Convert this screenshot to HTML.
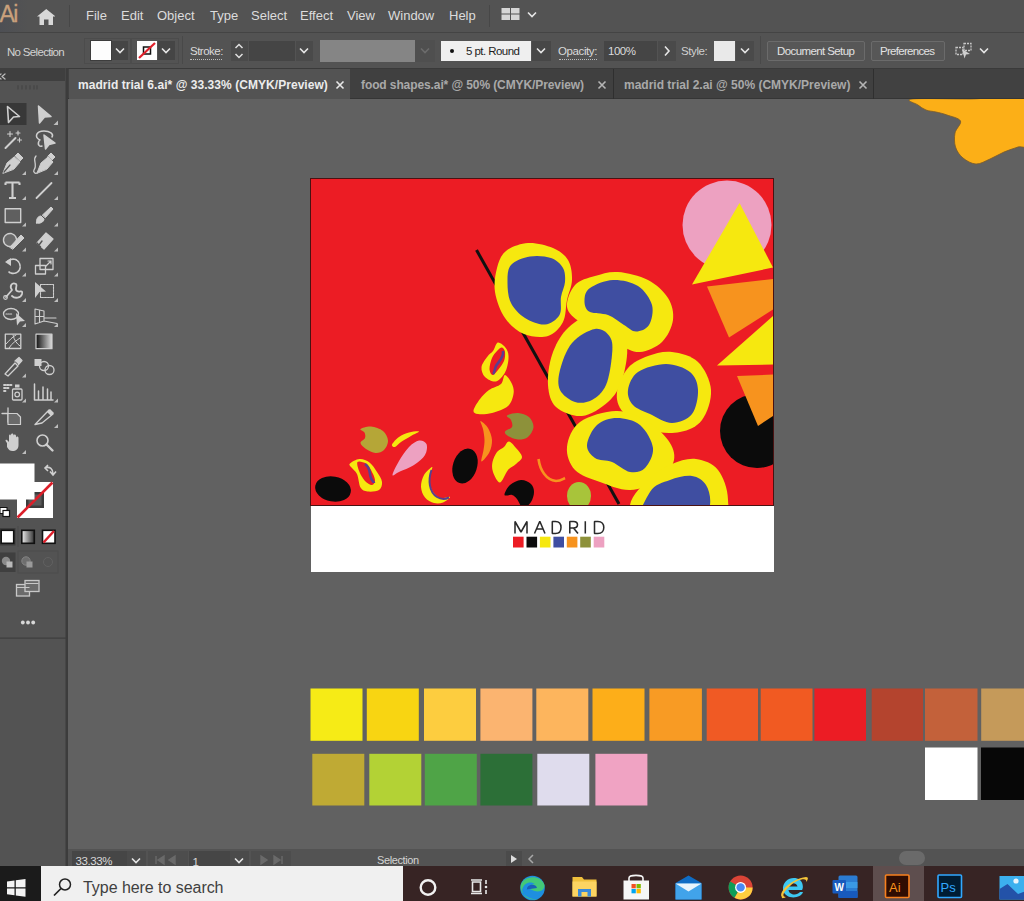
<!DOCTYPE html>
<html><head><meta charset="utf-8">
<style>
*{margin:0;padding:0;box-sizing:border-box}
html,body{width:1024px;height:901px;overflow:hidden;background:#616161;font-family:"Liberation Sans",sans-serif}
.a{position:absolute}
.t{position:absolute;white-space:nowrap;line-height:1}
#menubar{left:0;top:0;width:1024px;height:32px;background:#535353}
.mi{color:#dcdcdc;font-size:13px;top:9px}
#ctrl{left:0;top:32px;width:1024px;height:36px;background:#535353;border-top:1px solid #444;}
.ct{color:#d6d6d6;font-size:11.5px}
.box{position:absolute;background:#454545}
.chev{position:absolute}
#tabs{left:68px;top:68px;width:956px;height:31px;background:#414141;border-top:1px solid #3a3a3a;border-bottom:1px solid #353535}
#toolbar{left:0;top:68px;width:66px;height:798px;background:#535353}
#tbhead{left:0;top:68px;width:66px;height:13px;background:#3f3f3f}
#tbborder{left:65px;top:68px;width:3px;height:798px;background:#3c3c3c;border-left:1px solid #474747}
#status{left:68px;top:849px;width:956px;height:17px;background:#535353}
#taskbar{left:0;top:866px;width:1024px;height:35px;background:#372424}
</style></head><body>
<!-- canvas art -->
<svg class="a" style="left:0;top:0" width="1024" height="901" viewBox="0 0 1024 901">
  <defs><clipPath id="ab"><rect x="311" y="179" width="462" height="326"/></clipPath></defs>
  <rect x="311" y="178" width="463" height="394" fill="#fff"/>
  <rect x="310" y="178" width="464" height="328" fill="#4a1212"/>
  <rect x="311" y="179" width="462" height="326" fill="#ec1c24"/>
  <g clip-path="url(#ab)">
<circle cx="727" cy="225" r="44.5" fill="#eda1c1"/>
<polygon points="739.5,203 692,284.5 773,267.5" fill="#f6e80f"/>
<polygon points="707,286.5 773,279 773,309.5 729,337.5" fill="#f7931e"/>
<polygon points="773,316 717,365.5 773,364.5" fill="#f6e80f"/>
<circle cx="757" cy="431" r="37" fill="#0b0b0b"/>
<polygon points="737,376 773,374.5 773,416 758,426" fill="#f7931e"/>
<line x1="476.5" y1="250" x2="619" y2="504" stroke="#111" stroke-width="3"/>
<path d="M528.0,243.0 C535.8,242.5 546.3,245.2 553.0,248.0 C559.7,250.8 564.8,254.7 568.0,260.0 C571.2,265.3 572.2,273.3 572.0,280.0 C571.8,286.7 568.5,293.0 567.0,300.0 C565.5,307.0 566.2,316.0 563.0,322.0 C559.8,328.0 554.5,334.0 548.0,336.0 C541.5,338.0 531.2,337.0 524.0,334.0 C516.8,331.0 509.8,325.0 505.0,318.0 C500.2,311.0 496.3,300.3 495.0,292.0 C493.7,283.7 495.2,274.8 497.0,268.0 C498.8,261.2 500.8,255.2 506.0,251.0 C511.2,246.8 520.2,243.5 528.0,243.0Z" fill="#f6e80f"/>
<path d="M618.0,272.0 C626.8,272.7 639.7,275.7 648.0,280.0 C656.3,284.3 663.8,291.3 668.0,298.0 C672.2,304.7 674.0,312.7 673.0,320.0 C672.0,327.3 667.5,336.7 662.0,342.0 C656.5,347.3 647.0,351.5 640.0,352.0 C633.0,352.5 626.7,348.7 620.0,345.0 C613.3,341.3 606.7,333.8 600.0,330.0 C593.3,326.2 585.5,325.8 580.0,322.0 C574.5,318.2 567.8,313.2 567.0,307.0 C566.2,300.8 570.3,290.2 575.0,285.0 C579.7,279.8 587.8,278.2 595.0,276.0 C602.2,273.8 609.2,271.3 618.0,272.0Z" fill="#f6e80f"/>
<path d="M590.0,315.0 C598.2,313.7 608.8,317.0 615.0,322.0 C621.2,327.0 625.8,335.3 627.0,345.0 C628.2,354.7 625.2,370.5 622.0,380.0 C618.8,389.5 614.7,396.0 608.0,402.0 C601.3,408.0 590.7,415.2 582.0,416.0 C573.3,416.8 561.7,412.2 556.0,407.0 C550.3,401.8 548.7,393.7 548.0,385.0 C547.3,376.3 549.0,364.2 552.0,355.0 C555.0,345.8 559.7,336.7 566.0,330.0 C572.3,323.3 581.8,316.3 590.0,315.0Z" fill="#f6e80f"/>
<path d="M672.0,352.0 C680.3,353.0 691.5,355.7 698.0,362.0 C704.5,368.3 710.3,380.3 711.0,390.0 C711.7,399.7 707.2,413.0 702.0,420.0 C696.8,427.0 688.7,430.3 680.0,432.0 C671.3,433.7 659.5,433.3 650.0,430.0 C640.5,426.7 628.5,418.3 623.0,412.0 C617.5,405.7 616.2,399.3 617.0,392.0 C617.8,384.7 622.8,374.0 628.0,368.0 C633.2,362.0 640.7,358.7 648.0,356.0 C655.3,353.3 663.7,351.0 672.0,352.0Z" fill="#f6e80f"/>
<path d="M616.0,411.0 C626.8,410.7 636.3,415.2 645.0,420.0 C653.7,424.8 663.2,433.3 668.0,440.0 C672.8,446.7 675.3,453.3 674.0,460.0 C672.7,466.7 667.3,475.0 660.0,480.0 C652.7,485.0 640.0,489.7 630.0,490.0 C620.0,490.3 609.2,485.3 600.0,482.0 C590.8,478.7 580.5,475.8 575.0,470.0 C569.5,464.2 566.2,455.0 567.0,447.0 C567.8,439.0 571.8,428.0 580.0,422.0 C588.2,416.0 605.2,411.3 616.0,411.0Z" fill="#f6e80f"/>
<path d="M696.0,459.0 C703.7,460.0 712.7,463.2 718.0,470.0 C723.3,476.8 727.7,488.3 728.0,500.0 C728.3,511.7 734.7,533.3 720.0,540.0 C705.3,546.7 655.0,545.8 640.0,540.0 C625.0,534.2 628.3,515.3 630.0,505.0 C631.7,494.7 643.0,484.8 650.0,478.0 C657.0,471.2 664.3,467.2 672.0,464.0 C679.7,460.8 688.3,458.0 696.0,459.0Z" fill="#f6e80f"/>
<path d="M530.0,256.5 C536.7,255.3 545.5,256.1 551.0,258.0 C556.5,259.9 560.7,264.0 563.0,268.0 C565.3,272.0 565.3,277.2 565.0,282.0 C564.7,286.8 561.9,291.5 561.0,297.0 C560.1,302.5 562.2,310.4 559.5,315.0 C556.8,319.6 550.8,324.0 545.0,324.5 C539.2,325.0 530.7,321.6 525.0,318.0 C519.3,314.4 513.9,308.8 511.0,303.0 C508.1,297.2 507.5,289.3 507.5,283.0 C507.5,276.7 507.2,269.4 511.0,265.0 C514.8,260.6 523.3,257.7 530.0,256.5Z" fill="#3f4ea1"/>
<path d="M590.0,288.0 C594.8,284.7 605.0,280.3 613.0,280.0 C621.0,279.7 631.5,281.8 638.0,286.0 C644.5,290.2 650.2,298.5 652.0,305.0 C653.8,311.5 651.7,320.6 649.0,325.0 C646.3,329.4 640.2,331.5 636.0,331.5 C631.8,331.5 628.7,327.8 624.0,325.0 C619.3,322.2 613.8,317.2 608.0,315.0 C602.2,312.8 592.9,314.0 589.0,311.5 C585.1,309.0 584.3,303.9 584.5,300.0 C584.7,296.1 585.2,291.3 590.0,288.0Z" fill="#3f4ea1"/>
<path d="M595.0,329.0 C601.3,328.0 607.2,332.7 610.0,337.0 C612.8,341.3 612.7,347.0 612.0,355.0 C611.3,363.0 609.3,377.5 606.0,385.0 C602.7,392.5 597.2,397.2 592.0,400.0 C586.8,402.8 580.3,403.7 575.0,402.0 C569.7,400.3 562.5,395.3 560.0,390.0 C557.5,384.7 558.0,377.8 560.0,370.0 C562.0,362.2 566.2,349.8 572.0,343.0 C577.8,336.2 588.7,330.0 595.0,329.0Z" fill="#3f4ea1"/>
<path d="M666.0,364.0 C674.7,364.0 684.7,367.7 690.0,372.0 C695.3,376.3 697.7,383.0 698.0,390.0 C698.3,397.0 696.3,408.5 692.0,414.0 C687.7,419.5 679.0,423.0 672.0,423.0 C665.0,423.0 656.5,417.0 650.0,414.0 C643.5,411.0 636.7,409.0 633.0,405.0 C629.3,401.0 627.2,395.5 628.0,390.0 C628.8,384.5 631.7,376.3 638.0,372.0 C644.3,367.7 657.3,364.0 666.0,364.0Z" fill="#3f4ea1"/>
<path d="M617.0,418.0 C624.2,418.0 634.0,420.0 640.0,425.0 C646.0,430.0 652.2,440.8 653.0,448.0 C653.8,455.2 648.8,464.0 645.0,468.0 C641.2,472.0 635.5,473.0 630.0,472.0 C624.5,471.0 617.8,464.3 612.0,462.0 C606.2,459.7 599.2,460.8 595.0,458.0 C590.8,455.2 586.7,450.5 587.0,445.0 C587.3,439.5 592.0,429.5 597.0,425.0 C602.0,420.5 609.8,418.0 617.0,418.0Z" fill="#3f4ea1"/>
<path d="M692.0,476.0 C698.0,476.8 703.0,480.2 706.0,485.0 C709.0,489.8 711.0,497.5 710.0,505.0 C709.0,512.5 711.7,525.8 700.0,530.0 C688.3,534.2 648.3,536.3 640.0,530.0 C631.7,523.7 645.0,500.3 650.0,492.0 C655.0,483.7 663.0,482.7 670.0,480.0 C677.0,477.3 686.0,475.2 692.0,476.0Z" fill="#3f4ea1"/>
<ellipse cx="579" cy="496" rx="12" ry="14" fill="#a8c43a"/>
<path d="M498.0,342.5 C500.2,342.2 504.8,346.2 506.5,349.0 C508.2,351.8 508.8,355.1 508.5,359.0 C508.2,362.9 507.1,368.8 505.0,372.5 C502.9,376.2 499.3,380.8 496.0,381.5 C492.7,382.2 487.4,379.4 485.0,377.0 C482.6,374.6 481.1,370.4 481.5,367.0 C481.9,363.6 485.6,359.2 487.5,356.5 C489.4,353.8 491.2,353.3 493.0,351.0 C494.8,348.7 495.8,342.8 498.0,342.5Z" fill="#f6e80f"/>
<path d="M502.0,347.5 C503.3,347.7 504.7,349.8 505.0,352.0 C505.3,354.2 505.2,358.0 504.0,361.0 C502.8,364.0 499.9,367.7 498.0,370.0 C496.1,372.3 493.9,375.2 492.5,375.0 C491.1,374.8 489.6,371.8 489.5,369.0 C489.4,366.2 490.8,361.0 492.0,358.0 C493.2,355.0 495.3,352.8 497.0,351.0 C498.7,349.2 500.7,347.3 502.0,347.5Z" fill="#ec1c24"/>
<path d="M503,351 C504,358 498,362 496,366 C494.5,369 495,372 493,374" stroke="#5a3f8f" stroke-width="2.6" fill="none"/>
<path d="M473.5,410.5 C473.8,408.0 477.4,402.4 480.0,399.0 C482.6,395.6 485.5,392.5 489.0,390.0 C492.5,387.5 498.3,386.5 501.0,384.0 C503.7,381.5 503.2,375.0 505.0,375.0 C506.8,375.0 510.6,380.8 512.0,384.0 C513.4,387.2 514.2,390.3 513.5,394.0 C512.8,397.7 511.6,402.8 508.0,406.0 C504.4,409.2 497.0,411.7 492.0,413.0 C487.0,414.3 481.1,414.4 478.0,414.0 C474.9,413.6 473.2,413.0 473.5,410.5Z" fill="#f6e80f"/>
<path d="M507.0,415.5 C508.2,414.3 514.3,412.8 518.0,413.0 C521.7,413.2 526.4,414.7 529.0,417.0 C531.6,419.3 533.7,423.7 533.5,427.0 C533.3,430.3 530.6,434.9 528.0,437.0 C525.4,439.1 521.3,439.7 518.0,439.5 C514.7,439.3 510.2,437.3 508.0,436.0 C505.8,434.7 504.3,433.0 505.0,431.5 C505.7,430.0 511.0,428.9 512.0,427.0 C513.0,425.1 511.8,421.9 511.0,420.0 C510.2,418.1 505.8,416.7 507.0,415.5Z" fill="#8d913a"/>
<path d="M480.5,421.0 C481.3,420.8 486.1,424.8 488.0,428.0 C489.9,431.2 491.8,436.0 492.0,440.0 C492.2,444.0 491.2,448.4 489.5,452.0 C487.8,455.6 482.5,461.8 481.5,461.5 C480.5,461.2 483.0,453.6 483.5,450.0 C484.0,446.4 484.6,443.5 484.5,440.0 C484.4,436.5 483.7,432.2 483.0,429.0 C482.3,425.8 479.7,421.2 480.5,421.0Z" fill="#f7931e"/>
<path d="M509.0,441.5 C511.0,441.7 513.8,445.4 516.0,448.0 C518.2,450.6 522.0,454.3 522.0,457.0 C522.0,459.7 518.3,461.8 516.0,464.0 C513.7,466.2 510.7,466.9 508.0,470.0 C505.3,473.1 502.5,482.2 500.0,482.5 C497.5,482.8 494.2,475.4 493.0,472.0 C491.8,468.6 491.8,465.3 492.5,462.0 C493.2,458.7 495.1,454.5 497.0,452.0 C498.9,449.5 502.0,448.8 504.0,447.0 C506.0,445.2 507.0,441.3 509.0,441.5Z" fill="#f6e80f"/>
<path d="M504.5,495.0 C504.2,493.3 507.2,487.5 510.0,485.0 C512.8,482.5 517.5,480.2 521.0,480.0 C524.5,479.8 528.8,482.0 531.0,484.0 C533.2,486.0 534.0,489.0 534.0,492.0 C534.0,495.0 532.8,499.3 531.0,502.0 C529.2,504.7 525.3,508.5 523.0,508.0 C520.7,507.5 518.8,501.2 517.0,499.0 C515.2,496.8 514.1,495.7 512.0,495.0 C509.9,494.3 504.8,496.7 504.5,495.0Z" fill="#0b0b0b"/>
<path d="M538.5,459 C540,470 546,480 556,481 C560,481 563,479 565,478" stroke="#f7931e" stroke-width="2.6" fill="none"/>
<ellipse cx="465" cy="466" rx="12" ry="18" transform="rotate(18 465 466)" fill="#0b0b0b"/>
<ellipse cx="333" cy="489" rx="18" ry="12.5" transform="rotate(10 333 489)" fill="#0b0b0b"/>
<path d="M360.5,429.0 C361.6,428.0 367.2,426.2 371.0,426.5 C374.8,426.8 380.2,428.7 383.0,431.0 C385.8,433.3 387.8,437.3 388.0,440.5 C388.2,443.7 386.1,447.9 384.0,450.0 C381.9,452.1 378.5,453.2 375.5,453.0 C372.5,452.8 368.5,450.7 366.0,449.0 C363.5,447.3 360.7,444.8 360.5,443.0 C360.3,441.2 364.3,439.8 365.0,438.0 C365.7,436.2 365.2,434.0 364.5,432.5 C363.8,431.0 359.4,430.0 360.5,429.0Z" fill="#b5a637"/>
<path d="M350.0,463.5 C351.4,462.2 356.2,459.2 359.5,459.0 C362.8,458.8 366.6,460.3 369.5,462.5 C372.4,464.7 374.9,468.8 377.0,472.0 C379.1,475.2 381.7,479.0 382.0,482.0 C382.3,485.0 381.4,488.4 379.0,490.0 C376.6,491.6 370.6,491.9 367.5,491.5 C364.4,491.1 362.2,490.4 360.5,487.5 C358.8,484.6 358.6,477.4 357.0,474.0 C355.4,470.6 352.2,468.8 351.0,467.0 C349.8,465.2 348.6,464.8 350.0,463.5Z" fill="#f6e80f"/>
<path d="M357.5,462.0 C358.6,460.6 363.8,462.2 366.0,463.5 C368.2,464.8 369.5,467.2 371.0,470.0 C372.5,472.8 374.8,477.5 375.0,480.0 C375.2,482.5 373.7,484.8 372.0,485.0 C370.3,485.2 367.1,483.2 365.0,481.0 C362.9,478.8 360.8,475.2 359.5,472.0 C358.2,468.8 356.4,463.4 357.5,462.0Z" fill="#ec1c24"/>
<path d="M365,464 C371,468 369,474 371,478 C372,481 374,482 374,483" stroke="#5a3f8f" stroke-width="2.6" fill="none"/>
<path d="M392.0,444.5 C392.7,442.8 396.2,439.0 399.0,437.0 C401.8,435.0 405.7,433.4 409.0,432.5 C412.3,431.6 418.7,430.9 419.0,431.5 C419.3,432.1 414.0,434.2 411.0,436.0 C408.0,437.8 403.7,440.2 401.0,442.0 C398.3,443.8 396.5,446.6 395.0,447.0 C393.5,447.4 391.3,446.2 392.0,444.5Z" fill="#f6e80f"/>
<path d="M392.5,475.0 C392.5,473.2 396.2,465.7 399.0,461.0 C401.8,456.3 405.7,450.4 409.0,447.0 C412.3,443.6 416.1,441.0 419.0,440.5 C421.9,440.0 425.5,441.6 426.5,444.0 C427.5,446.4 427.1,451.5 425.0,455.0 C422.9,458.5 418.3,462.2 414.0,465.0 C409.7,467.8 402.6,470.3 399.0,472.0 C395.4,473.7 392.5,476.8 392.5,475.0Z" fill="#eda1c1"/>
<path d="M432.0,467.0 C430.8,467.5 425.8,471.7 424.0,475.0 C422.2,478.3 420.8,483.2 421.0,487.0 C421.2,490.8 422.8,494.8 425.0,497.5 C427.2,500.2 431.0,502.2 434.0,503.0 C437.0,503.8 440.3,503.5 443.0,502.5 C445.7,501.5 450.5,497.8 450.0,497.0 C449.5,496.2 442.9,499.0 440.0,498.0 C437.1,497.0 434.2,493.8 432.5,491.0 C430.8,488.2 429.8,484.2 429.5,481.0 C429.2,477.8 430.6,474.3 431.0,472.0 C431.4,469.7 433.2,466.5 432.0,467.0Z" fill="#f6e80f"/>
<path d="M431.5,470 C428,480 429,492 437,497 C441,499.5 446,499 449,497.5" stroke="#5a3f8f" stroke-width="2" fill="none"/>
  </g>
<path d="M515,533.5 V521.5 L521,532 L527,521.5 V533.5 M534.5,533.5 L539.8,521.3 L545,533.5 M536.6,529 H543 M552.3,533.5 V521.5 H555.5 C559.5,521.5 561,524.5 561,527.5 C561,530.5 559.5,533.5 555.5,533.5 Z M569.8,533.5 V521.5 H573.5 C576.5,521.5 577.5,523 577.5,524.8 C577.5,526.8 576,528 573.5,528 H569.8 M573.5,528 L578,533.5 M585.3,521.3 V533.5 M594.5,533.5 V521.5 H597.8 C602,521.5 603.8,524.5 603.8,527.5 C603.8,530.5 602,533.5 597.8,533.5 Z" fill="none" stroke="#2a2a2a" stroke-width="1.55" stroke-linejoin="bevel"/>
<rect x="513.0" y="536.7" width="10.6" height="10.8" fill="#ec1c24"/>
<rect x="526.5" y="536.7" width="10.6" height="10.8" fill="#0b0b0b"/>
<rect x="539.9" y="536.7" width="10.6" height="10.8" fill="#f6e80f"/>
<rect x="553.4" y="536.7" width="10.6" height="10.8" fill="#3f4ea1"/>
<rect x="566.8" y="536.7" width="10.6" height="10.8" fill="#f7931e"/>
<rect x="580.2" y="536.7" width="10.6" height="10.8" fill="#8d913a"/>
<rect x="593.7" y="536.7" width="10.6" height="10.8" fill="#eda1c1"/>
<rect x="310.5" y="688.5" width="52.0" height="52.3" fill="#f6eb16"/>
<rect x="366.8" y="688.5" width="52.0" height="52.3" fill="#f8d512"/>
<rect x="424.0" y="688.5" width="52.0" height="52.3" fill="#fdcd3f"/>
<rect x="480.4" y="688.5" width="52.0" height="52.3" fill="#fbb470"/>
<rect x="536.3" y="688.5" width="52.0" height="52.3" fill="#fdb55d"/>
<rect x="592.5" y="688.5" width="52.0" height="52.3" fill="#fdae19"/>
<rect x="649.4" y="688.5" width="52.5" height="52.3" fill="#f89b24"/>
<rect x="706.7" y="688.5" width="51.3" height="52.3" fill="#f05a24"/>
<rect x="760.7" y="688.5" width="51.8" height="52.3" fill="#f15a22"/>
<rect x="814.4" y="688.5" width="51.6" height="52.3" fill="#ec1c24"/>
<rect x="871.7" y="688.5" width="51.3" height="52.3" fill="#b4442e"/>
<rect x="925.0" y="688.5" width="52.5" height="52.3" fill="#c3613a"/>
<rect x="981.2" y="688.5" width="52.0" height="52.3" fill="#c59a5a"/>
<rect x="312.3" y="753.8" width="52" height="51.7" fill="#bfaa34"/>
<rect x="369.3" y="753.8" width="52" height="51.7" fill="#b3d235"/>
<rect x="424.8" y="753.8" width="52" height="51.7" fill="#4fa447"/>
<rect x="480.4" y="753.8" width="52" height="51.7" fill="#2c6f37"/>
<rect x="537.3" y="753.8" width="52" height="51.7" fill="#dfdced"/>
<rect x="595.4" y="753.8" width="52" height="51.7" fill="#f0a3c3"/>
<rect x="925" y="747.5" width="52.5" height="52.5" fill="#ffffff"/>
<rect x="981" y="747.5" width="45" height="52.5" fill="#070707"/>
<path d="M912.0,99.0 C903.3,100.0 915.7,103.2 918.0,105.0 C920.3,106.8 923.0,108.8 926.0,110.0 C929.0,111.2 932.5,111.2 936.0,112.0 C939.5,112.8 942.9,113.5 947.0,115.0 C951.1,116.5 959.2,118.0 960.5,121.0 C961.8,124.0 955.8,128.7 955.0,133.0 C954.2,137.3 954.2,142.8 955.5,147.0 C956.8,151.2 959.6,155.2 963.0,158.0 C966.4,160.8 971.5,163.8 976.0,164.0 C980.5,164.2 985.3,161.0 990.0,159.0 C994.7,157.0 999.3,154.0 1004.0,152.0 C1008.7,150.0 1013.7,148.5 1018.0,147.0 C1022.3,145.5 1028.0,151.0 1030.0,143.0 C1032.0,135.0 1040.0,106.3 1030.0,99.0 C1020.0,91.7 989.7,99.0 970.0,99.0 C950.3,99.0 920.7,98.0 912.0,99.0Z" fill="#fcaf17" stroke="#7a5a2a" stroke-width="0.8"/>
</svg>

<div id="menubar" class="a"></div>
<div class="a" style="left:0;top:0;width:28px;height:32px;background:linear-gradient(90deg,#4d4f54,#535353)"></div>
<div class="t" style="left:-0.5px;top:2.5px;font-size:23px;color:#c9a07c;letter-spacing:-1.5px;-webkit-text-stroke:0.3px #c9a07c">Ai</div>
<svg class="a" style="left:36.5px;top:8.5px" width="18.5" height="16.5" viewBox="0 0 18.5 16.5"><path d="M9.25 0 L18.5 7.5 L16 7.5 L16 16.5 L11.5 16.5 L11.5 10.5 L7 10.5 L7 16.5 L2.5 16.5 L2.5 7.5 L0 7.5Z" fill="#d8d8d8"/></svg>
<div class="a" style="left:69px;top:5px;width:1px;height:22px;background:#474747"></div>
<div class="t mi" style="left:86px">File</div>
<div class="t mi" style="left:121px">Edit</div>
<div class="t mi" style="left:157px">Object</div>
<div class="t mi" style="left:210px">Type</div>
<div class="t mi" style="left:251px">Select</div>
<div class="t mi" style="left:300px">Effect</div>
<div class="t mi" style="left:347px">View</div>
<div class="t mi" style="left:388px">Window</div>
<div class="t mi" style="left:449px">Help</div>
<div class="a" style="left:489px;top:5px;width:1px;height:22px;background:#474747"></div>
<svg class="a" style="left:501px;top:8px" width="19" height="12" viewBox="0 0 19 12"><rect x="0.5" y="0" width="8.5" height="5.5" fill="#d6d6d6"/><rect x="0.5" y="6.5" width="8.5" height="5.5" fill="#d6d6d6"/><rect x="10" y="0" width="8.5" height="5.5" fill="#d6d6d6"/><rect x="10" y="6.5" width="8.5" height="5.5" fill="#d6d6d6"/></svg>
<svg class="a" style="left:527px;top:11px" width="10" height="7" viewBox="0 0 10 7"><path d="M1 1.5 L5 5.5 L9 1.5" stroke="#e6e6e6" stroke-width="1.6" fill="none"/></svg>

<div id="ctrl" class="a"></div>

<!-- control bar contents -->
<div class="t ct" style="left:7px;top:46.5px;font-size:11.5px;color:#d2d2d2;letter-spacing:-0.68px">No Selection</div>
<div class="a" style="left:84px;top:38px;width:47px;height:26px;border:1px solid #4c4c4c"></div>
<div class="a" style="left:131px;top:38px;width:48px;height:26px;border:1px solid #4c4c4c"></div>
<div class="a" style="left:90px;top:40px;width:22px;height:21px;background:#3d3d3d"></div>
<div class="a" style="left:91px;top:41px;width:20px;height:19px;background:#fdfdfd"></div>
<div class="box" style="left:112px;top:41px;width:16px;height:19px"></div>
<svg class="a" style="left:115px;top:47px" width="10" height="7" viewBox="0 0 10 7"><path d="M1 1.5 L5 5.5 L9 1.5" stroke="#e6e6e6" stroke-width="1.6" fill="none"/></svg>
<div class="a" style="left:137px;top:41px;width:20px;height:19px;background:#fdfdfd"></div>
<svg class="a" style="left:137px;top:41px" width="20" height="19" viewBox="0 0 20 19"><rect x="6.5" y="6" width="7" height="7" fill="none" stroke="#111" stroke-width="1.5"/><line x1="2" y1="17" x2="18" y2="2" stroke="#e0202a" stroke-width="2.2"/></svg>
<div class="box" style="left:158px;top:41px;width:17px;height:19px"></div>
<svg class="a" style="left:161px;top:47px" width="10" height="7" viewBox="0 0 10 7"><path d="M1 1.5 L5 5.5 L9 1.5" stroke="#e6e6e6" stroke-width="1.6" fill="none"/></svg>
<div class="a" style="left:182px;top:36px;width:1px;height:28px;background:#494949"></div>
<div class="t ct" style="left:190px;top:46px;font-size:11.5px;color:#dadada;letter-spacing:-0.5px">Stroke:</div>
<div class="a" style="left:190px;top:59px;width:32px;height:0;border-top:1px dotted #bdbdbd"></div>
<div class="box" style="left:231px;top:41px;width:17px;height:20px;background:#4a4a4a"></div>
<svg class="a" style="left:233px;top:42px" width="12" height="18" viewBox="0 0 12 18"><path d="M2.5 6 L6 2.5 L9.5 6 M2.5 12 L6 15.5 L9.5 12" stroke="#e0e0e0" stroke-width="1.5" fill="none"/></svg>
<div class="box" style="left:249px;top:41px;width:46px;height:20px;background:#454545"></div>
<div class="box" style="left:296px;top:41px;width:17px;height:20px;background:#4a4a4a"></div>
<svg class="a" style="left:299px;top:47px" width="10" height="7" viewBox="0 0 10 7"><path d="M1 1.5 L5 5.5 L9 1.5" stroke="#e6e6e6" stroke-width="1.6" fill="none"/></svg>
<div class="a" style="left:320px;top:40px;width:95px;height:22px;background:#858585"></div>
<div class="box" style="left:415px;top:40px;width:20px;height:22px;background:#4f4f4f"></div>
<svg class="a" style="left:420px;top:47px" width="10" height="7" viewBox="0 0 10 7"><path d="M1 1.5 L5 5.5 L9 1.5" stroke="#6c6c6c" stroke-width="1.6" fill="none"/></svg>
<div class="a" style="left:441px;top:40.5px;width:90px;height:20.5px;background:#efefef"></div>
<div class="a" style="left:449.5px;top:48.5px;width:4.5px;height:4.5px;border-radius:50%;background:#111"></div>
<div class="t" style="left:466px;top:45.5px;font-size:11.5px;color:#1e1e1e;letter-spacing:-0.55px">5 pt. Round</div>
<div class="box" style="left:532px;top:41px;width:19px;height:20px;background:#474747"></div>
<svg class="a" style="left:536px;top:47px" width="10" height="7" viewBox="0 0 10 7"><path d="M1 1.5 L5 5.5 L9 1.5" stroke="#e6e6e6" stroke-width="1.6" fill="none"/></svg>
<div class="t ct" style="left:558px;top:46px;font-size:11.5px;color:#dadada;letter-spacing:-0.4px">Opacity:</div>
<div class="a" style="left:559px;top:59px;width:38px;height:0;border-top:1px dotted #bdbdbd"></div>
<div class="box" style="left:604px;top:41px;width:53px;height:20px;background:#454545"></div>
<div class="t ct" style="left:608px;top:46px;font-size:11.5px;color:#dcdcdc;letter-spacing:-0.5px">100%</div>
<div class="box" style="left:658px;top:41px;width:18px;height:20px;background:#4a4a4a"></div>
<svg class="a" style="left:663px;top:45px" width="8" height="12" viewBox="0 0 8 12"><path d="M2 1.5 L6 6 L2 10.5" stroke="#e6e6e6" stroke-width="1.6" fill="none"/></svg>
<div class="t ct" style="left:681px;top:46px;font-size:11.5px;color:#cfcfcf;letter-spacing:-0.4px">Style:</div>
<div class="a" style="left:714px;top:40.5px;width:21px;height:20.5px;background:#e9e9e9"></div>
<div class="box" style="left:736px;top:41px;width:18px;height:20px;background:#4a4a4a"></div>
<svg class="a" style="left:740px;top:47px" width="10" height="7" viewBox="0 0 10 7"><path d="M1 1.5 L5 5.5 L9 1.5" stroke="#e6e6e6" stroke-width="1.6" fill="none"/></svg>
<div class="a" style="left:760px;top:36px;width:1px;height:28px;background:#494949"></div>
<div class="a" style="left:767px;top:40.5px;width:98px;height:20px;border:1px solid #6b6b6b;border-radius:2px;background:#575757"></div>
<div class="t ct" style="left:777px;top:46px;font-size:11.5px;color:#e2e2e2;letter-spacing:-0.6px">Document Setup</div>
<div class="a" style="left:871px;top:40.5px;width:74px;height:20px;border:1px solid #6b6b6b;border-radius:2px;background:#575757"></div>
<div class="t ct" style="left:880px;top:46px;font-size:11.5px;color:#e2e2e2;letter-spacing:-0.7px">Preferences</div>
<svg class="a" style="left:954px;top:42px" width="20" height="18" viewBox="0 0 20 18"><rect x="2" y="5.5" width="7" height="7" fill="none" stroke="#c8c8c8" stroke-width="1.3" stroke-dasharray="2 1"/><rect x="10" y="1.5" width="7" height="7" fill="none" stroke="#c8c8c8" stroke-width="1.3" stroke-dasharray="2 1"/><path d="M8 7 L16 12 L12 12.5 L10.5 16.5Z" fill="#d0d0d0"/></svg>
<svg class="a" style="left:979px;top:47px" width="10" height="7" viewBox="0 0 10 7"><path d="M1 1.5 L5 5.5 L9 1.5" stroke="#e6e6e6" stroke-width="1.6" fill="none"/></svg>
<div id="tabs" class="a"></div>

<!-- tabs -->
<div class="a" style="left:69px;top:69px;width:281px;height:30px;background:#535353"></div>
<div class="t" style="left:78px;top:79px;font-size:12px;font-weight:bold;color:#ececec;letter-spacing:0.05px">madrid trial 6.ai* @ 33.33% (CMYK/Preview)</div>
<svg class="a" style="left:335px;top:80px" width="10" height="10" viewBox="0 0 10 10"><path d="M1.5 1.5 L8.5 8.5 M8.5 1.5 L1.5 8.5" stroke="#e8e8e8" stroke-width="1.6"/></svg>
<div class="a" style="left:350px;top:69px;width:263px;height:29px;background:#404040"></div>
<div class="t" style="left:361px;top:79px;font-size:12px;font-weight:bold;color:#a9a9a9;letter-spacing:-0.1px">food shapes.ai* @ 50% (CMYK/Preview)</div>
<svg class="a" style="left:597px;top:80px" width="10" height="10" viewBox="0 0 10 10"><path d="M1.5 1.5 L8.5 8.5 M8.5 1.5 L1.5 8.5" stroke="#b5b5b5" stroke-width="1.6"/></svg>
<div class="a" style="left:613px;top:69px;width:1px;height:30px;background:#2f2f2f"></div>
<div class="a" style="left:614px;top:69px;width:259px;height:29px;background:#404040"></div>
<div class="t" style="left:624px;top:79px;font-size:12px;font-weight:bold;color:#a9a9a9;letter-spacing:0px">madrid trial 2.ai @ 50% (CMYK/Preview)</div>
<svg class="a" style="left:858px;top:80px" width="10" height="10" viewBox="0 0 10 10"><path d="M1.5 1.5 L8.5 8.5 M8.5 1.5 L1.5 8.5" stroke="#b5b5b5" stroke-width="1.6"/></svg>
<div class="a" style="left:873px;top:69px;width:1px;height:30px;background:#2f2f2f"></div>
<div id="toolbar" class="a"></div>
<div id="tbhead" class="a"></div>
<div id="tbborder" class="a"></div>
<!--TOOLBAR-->
<svg class="a" style="left:0;top:0" width="68" height="866" viewBox="0 0 68 866">
<g fill="none" stroke="#cfcfcf" stroke-width="1.5" stroke-linejoin="round" stroke-linecap="round">
<!-- panel header -->
<path d="M1 74 L-2 76.5 L1 79 M5 74 L2 76.5 L5 79" stroke="#bdbdbd" stroke-width="1.2"/>
<path d="M18 85.5 V89 M22 85.5 V89 M26 85.5 V89 M30 85.5 V89 M34 85.5 V89 M37 85.5 V89" stroke="#444444" stroke-width="1.1"/>
<!-- row1 selection -->
<rect x="0" y="103" width="26.5" height="22" fill="#383838" stroke="none"/>
<path d="M7.5 106.5 L19.5 116.5 L13.5 117 L8.5 122.5 Z" stroke-width="1.6"/>
<path d="M38.5 106 L51 116.5 L44.5 117 L39.5 123 Z" fill="#cfcfcf"/>
<!-- row2 magic wand -->
<path d="M5.5 148 L15.5 138" stroke-width="2"/>
<path d="M10 131.5 V136.5 M7.5 134 H12.5 M18 131 V135 M16 133 H20 M19.5 138 V142 M17.5 140 H21.5" stroke-width="1.1"/>
<!-- lasso -->
<path d="M40 140 C34 137 36 131 44 131 C50 131 54 134 52 137 M39 141 C37 145 40 147 42 146" stroke-width="1.5"/>
<path d="M44 135 L55 143 L49 144.5 L45.5 149 Z" fill="#cfcfcf"/>
<!-- row3 pen -->
<path d="M3 173 L7 163 L14 157 L20 162 L14 169 Z" fill="#cfcfcf" stroke-width="1"/>
<path d="M15 156 L18 153 L23 158 L20 161 Z" fill="#cfcfcf" stroke-width="1"/>
<path d="M4 172 L10 165" stroke="#535353" stroke-width="1.2"/>
<path d="M36 156 C32 160 38 164 34 170 C33 172 35 174 37 173" stroke-width="1.3"/>
<path d="M37 173 L41 163 L48 157 L53 162 L47 169 Z" fill="#cfcfcf" stroke-width="1"/>
<path d="M48 156 L51 153 L55 157 L52 160 Z" fill="#cfcfcf" stroke-width="1"/>
<!-- row4 type / line -->
<path d="M5.5 182.5 H19.5 M12.5 182.5 V198 M9 198 H16 M5.5 182.5 V185 M19.5 182.5 V185" stroke-width="2.1" stroke-linecap="butt"/>
<path d="M36.5 198 L51.5 183" stroke-width="1.8"/>
<!-- row5 rect / brush -->
<rect x="5.2" y="208.7" width="15.5" height="13.8" fill="#5f5f5f" stroke-width="1.4"/>
<path d="M36.5 223 C36 219 38 216 41 216 L44 219 C44 222 40 224 36.5 223 Z" fill="#cfcfcf" stroke-width="1"/>
<path d="M42.5 215 L51 207 L53 209 L45.5 217.5 Z" fill="#cfcfcf" stroke-width="1"/>
<!-- row6 shaper / eraser -->
<circle cx="10" cy="240" r="6.5" fill="#6a6a6a" stroke-width="1.5" stroke-dasharray="3 1"/>
<path d="M10 247 L21 235 L24 238 L13 249 Z" fill="#cfcfcf" stroke-width="1"/>
<path d="M37 243 L46 233 L53 239 L44 249 Z" fill="#cfcfcf" stroke-width="1.2"/>
<path d="M37 243 L40.5 247 M39 245 L42 241" stroke="#535353" stroke-width="1.4"/>
<!-- row7 rotate / scale -->
<path d="M8 261 C15 256 21 262 20 268 C19 273 13 275 9 272" stroke-width="1.6" stroke-dasharray="2.2 1.2"/>
<path d="M5 262 L11 258 L11 266 Z" fill="#cfcfcf" stroke="none"/>
<rect x="35.5" y="265.5" width="10" height="8.5" stroke-width="1.3"/>
<rect x="40" y="258.5" width="13" height="11" stroke-width="1.3"/>
<path d="M46 266 L51 261 M48 261 H51 V264" stroke-width="1.2"/>
<!-- row8 puppet / free transform -->
<path d="M6 297 L12 290 C9 286 12 282 16 284 C18 286 14 289 17 291 C20 293 23 289 22 294 C21 298 15 299 12 296" stroke-width="1.8"/>
<circle cx="5.5" cy="297.5" r="1.8" stroke-width="1.2"/>
<path d="M35 282 L46 291.5 L39.5 292 L35 298 Z" fill="#cfcfcf" stroke="none"/>
<rect x="40.5" y="284.5" width="13" height="13" stroke-width="1.1" stroke-dasharray="2 1"/>
<!-- row9 shape builder / perspective -->
<ellipse cx="11" cy="314" rx="7.5" ry="5.5" stroke-width="1.3"/>
<path d="M6 314 H12" stroke-width="1.2" stroke-dasharray="1.2 1"/>
<path d="M16 313 L25 321 L20 321.5 L17 325.5 Z" fill="#cfcfcf" stroke="none"/>
<path d="M35 309 L44 311 V321 L35 324 Z M35 316.5 H44 M39.5 310 V322.5 M44 318 L56 318 M44 321 L57 323.5" stroke-width="1.1"/>
<!-- row10 mesh / gradient -->
<rect x="5.3" y="334.2" width="15.5" height="14.3" stroke-width="1.3"/>
<path d="M6 344 C10 340 12 337 16 335 M9 348 C12 343 16 341 20 338 M13 335 C14 340 17 344 20 346" stroke-width="1"/>
<defs><linearGradient id="tg" x1="0" x2="1"><stop offset="0" stop-color="#111"/><stop offset="1" stop-color="#ddd"/></linearGradient></defs>
<rect x="36" y="334.2" width="16" height="14.5" fill="url(#tg)" stroke-width="1.2"/>
<!-- row11 eyedropper / blend -->
<path d="M5 374 L15 363 L18 366 L8 376 Z" stroke-width="1.3"/>
<path d="M15 361 L19 357.5 L22 360.5 L18.5 364.5" fill="#cfcfcf" stroke-width="1.2"/>
<rect x="34.5" y="359" width="7" height="7" fill="#cfcfcf" stroke="none"/>
<circle cx="44" cy="366" r="4.5" stroke-width="1.3"/>
<circle cx="49.5" cy="370" r="4.5" stroke-width="1.3"/>
<!-- row12 symbol sprayer / graph -->
<path d="M4 385 h1.5 M7 385 h1.5 M10 385 h1.5 M4 388 h1.5 M7 388 h1.5 M4 391 h1.5" stroke-width="1.8"/>
<rect x="12.5" y="389" width="9.5" height="11" rx="1" stroke-width="1.3"/>
<rect x="15" y="384.5" width="4.5" height="3" fill="#cfcfcf" stroke="none"/>
<circle cx="17.2" cy="394.5" r="2.3" stroke-width="1.2"/>
<path d="M34.5 384 V400 H53 M38.5 399 V391 M43 399 V387 M47.5 399 V389 M51 399 V392" stroke-width="1.5"/>
<!-- row13 artboard / slice -->
<path d="M8 408 V422 M2 413.5 H8" stroke-width="1.3"/>
<path d="M8 413.5 H17 L20.5 417 V424.5 H8 Z" fill="#6a6a6a" stroke-width="1.2"/>
<path d="M35 424.5 L49 410 L53 414 L42 423 Z" stroke-width="1.3"/>
<path d="M47 412 L50 409 L54 413 L51 416 Z" fill="#cfcfcf" stroke="none"/>
<!-- row14 hand / zoom -->
<path d="M7 443 C5 441 5 439 7 440 L9 442 V436 C9 434 11 434 11 436 V440 V435 C11 433 13.5 433 13.5 435 V440 V436 C13.5 434 16 434 16 436 V441 V438 C16 436 18.5 436 18.5 438 V445 C18.5 449 16 451 12.5 451 C10 451 9 450 7 447 Z" fill="#cfcfcf" stroke="none"/>
<circle cx="42.5" cy="440.5" r="5.5" stroke-width="1.6"/>
<path d="M46.5 444.5 L52.5 450.5" stroke-width="2.4"/>
</g>
<!-- corner triangles -->
<g fill="#bdbdbd">
<path d="M58 120.5 V125 H53.5Z"/>
<path d="M58 171 V175 H54Z M26 171 V175 H22Z"/>
<path d="M58 196 V200 H54Z M26 196 V200 H22Z"/>
<path d="M58 222.5 V226.5 H54Z M26 222.5 V226.5 H22Z"/>
<path d="M58 247.5 V251.5 H54Z M26 247.5 V251.5 H22Z"/>
<path d="M58 272.5 V276.5 H54Z M26 272.5 V276.5 H22Z"/>
<path d="M58 298 V302 H54Z M26 298 V302 H22Z"/>
<path d="M58 323 V327 H54Z M26 323 V327 H22Z"/>
<path d="M26 373.5 V377.5 H22Z"/>
<path d="M58 398.5 V402.5 H54Z M26 398.5 V402.5 H22Z"/>
<path d="M58 424 V428 H54Z"/>
<path d="M26 450 V454 H22Z"/>
</g>
<!-- fill/stroke -->
<rect x="17" y="482" width="36" height="36" fill="#fff"/>
<rect x="26" y="492" width="18" height="16" fill="#3c3c3c"/>
<rect x="28.5" y="494.5" width="13" height="11" fill="#5a5a5a"/>
<line x1="17.5" y1="517.5" x2="52.5" y2="482.5" stroke="#dc1f2a" stroke-width="2.6"/>
<rect x="0" y="463.5" width="34.5" height="36" fill="#fff"/>
<path d="M45 468 C50 466 53 469 53 474 M50 471.5 L53 475 L56 471.5 M48 465 L45 468 L48 471" fill="none" stroke="#cfcfcf" stroke-width="1.6"/>
<rect x="0" y="507.5" width="7" height="6" fill="#fff" stroke="#111" stroke-width="1"/>
<rect x="3" y="510.5" width="6.5" height="6" fill="#fff" stroke="#111" stroke-width="1.2"/>
<!-- draw modes -->
<rect x="0" y="528" width="15.5" height="17.5" fill="#3d3d3d"/>
<rect x="1.2" y="530.3" width="12.5" height="13" fill="#fff" stroke="#111" stroke-width="1.6"/>
<defs><linearGradient id="tg2" x1="0" x2="1"><stop offset="0" stop-color="#eee"/><stop offset="1" stop-color="#333"/></linearGradient></defs>
<rect x="21.8" y="530.3" width="12.5" height="13" fill="url(#tg2)" stroke="#111" stroke-width="1.6"/>
<rect x="42.5" y="530.3" width="12.5" height="13" fill="#fff" stroke="#111" stroke-width="1.6"/>
<line x1="43.5" y1="542.5" x2="54" y2="531" stroke="#dc1f2a" stroke-width="2.5"/>
<rect x="17.5" y="526" width="1" height="21" fill="#4a4a4a"/>
<!-- screen modes -->
<rect x="0" y="552.5" width="15.5" height="19.5" fill="#3f3f3f"/>
<circle cx="6" cy="561" r="4.2" fill="#8a8a8a"/>
<rect x="6.5" y="561.5" width="6" height="6" fill="#b8b8b8"/>
<circle cx="26" cy="561" r="4.2" fill="#6e6e6e" stroke="#858585"/>
<rect x="26.5" y="561.5" width="6" height="6" fill="#9a9a9a"/>
<circle cx="48" cy="562" r="4.5" fill="none" stroke="#616161"/>
<rect x="18" y="551" width="40" height="22" fill="none" stroke="#4d4d4d" stroke-width="1"/>
<!-- change screen mode -->
<rect x="16.5" y="584.5" width="13" height="11.5" fill="#6b6b6b" stroke="#c8c8c8" stroke-width="1.3"/>
<rect x="25" y="580.5" width="14" height="11" fill="#6b6b6b" stroke="#c8c8c8" stroke-width="1.3"/>
<path d="M17 587.5 H29.5 M25.5 583.5 H38.5" stroke="#c8c8c8" stroke-width="1.2"/>
<!-- dots -->
<circle cx="22.8" cy="622.5" r="1.9" fill="#d8d8d8"/>
<circle cx="28" cy="622.5" r="1.9" fill="#d8d8d8"/>
<circle cx="33.2" cy="622.5" r="1.9" fill="#d8d8d8"/>
<rect x="0" y="637.5" width="66" height="1.2" fill="#3e3e3e"/>
</svg>

<div id="status" class="a"></div>
<div id="taskbar" class="a"></div>
<div class="a" style="left:0;top:866px;width:41px;height:35px;background:#1b1b1b"></div>
<div class="a" style="left:41px;top:866px;width:362px;height:35px;background:#f0f0f0"></div>
<!-- status bar -->
<div class="a" style="left:72px;top:851px;width:56px;height:15px;background:#464646"></div>
<div class="t" style="left:75.5px;top:855.5px;font-size:11.5px;color:#dadada;letter-spacing:-0.4px">33.33%</div>
<div class="a" style="left:127px;top:851px;width:19px;height:15px;background:#4b4b4b"></div>
<svg class="a" style="left:131px;top:857px" width="10" height="7" viewBox="0 0 10 7"><path d="M1 1.5 L5 5.5 L9 1.5" stroke="#e6e6e6" stroke-width="1.6" fill="none"/></svg>
<div class="a" style="left:148px;top:851px;width:40px;height:15px;background:#4d4d4d"></div>
<svg class="a" style="left:150px;top:852px" width="40" height="14" viewBox="0 0 40 14"><path d="M6 4 V12 M14 4 V12 L8 8 Z M25 4 V12 L19 8Z" fill="#6a6a6a" stroke="#6a6a6a" stroke-width="1.4"/></svg>
<div class="a" style="left:189px;top:851px;width:41px;height:15px;background:#464646"></div>
<div class="t" style="left:192.5px;top:857px;font-size:11.5px;color:#dadada">1</div>
<div class="a" style="left:230px;top:851px;width:19px;height:15px;background:#4b4b4b"></div>
<svg class="a" style="left:234px;top:857px" width="10" height="7" viewBox="0 0 10 7"><path d="M1 1.5 L5 5.5 L9 1.5" stroke="#e6e6e6" stroke-width="1.6" fill="none"/></svg>
<div class="a" style="left:251px;top:851px;width:40px;height:15px;background:#4d4d4d"></div>
<svg class="a" style="left:252px;top:852px" width="40" height="14" viewBox="0 0 40 14"><path d="M9 4 V12 L15 8Z M22 4 V12 L28 8 Z M30 4 V12" fill="#6a6a6a" stroke="#6a6a6a" stroke-width="1.4"/></svg>
<div class="t" style="left:377px;top:855px;font-size:11px;color:#d4d4d4;letter-spacing:-0.4px">Selection</div>
<div class="a" style="left:506px;top:851px;width:16px;height:15px;background:#4b4b4b"></div>
<svg class="a" style="left:509px;top:853px" width="10" height="12" viewBox="0 0 10 12"><path d="M2 2 L8 6 L2 10Z" fill="#dcdcdc"/></svg>
<svg class="a" style="left:526px;top:853px" width="10" height="12" viewBox="0 0 10 12"><path d="M7 2 L3 6 L7 10" fill="none" stroke="#a8a8a8" stroke-width="1.5"/></svg>
<div class="a" style="left:899px;top:851px;width:26px;height:14px;border-radius:7px;background:#6a6a6a"></div>
<!-- taskbar -->
<svg class="a" style="left:7px;top:879px" width="19" height="18" viewBox="0 0 19 18"><path d="M0 2.5 L7.5 1.5 V8.2 H0Z M8.8 1.3 L18.5 0 V8.2 H8.8Z M0 9.5 H7.5 V16.3 L0 15.3Z M8.8 9.5 H18.5 V17.8 L8.8 16.5Z" fill="#f4f4f4"/></svg>
<svg class="a" style="left:52px;top:876px" width="20" height="22" viewBox="0 0 20 22"><circle cx="13" cy="8.5" r="5.5" fill="none" stroke="#222" stroke-width="1.5"/><path d="M9 12.5 L2 19.5" stroke="#222" stroke-width="1.7"/></svg>
<div class="t" style="left:83px;top:879.5px;font-size:16px;color:#404040;letter-spacing:-0.05px">Type here to search</div>
<svg class="a" style="left:403px;top:866px" width="621" height="35" viewBox="403 866 621 35">
<circle cx="428" cy="887.5" r="7.3" fill="none" stroke="#f2f2f2" stroke-width="2.4"/>
<path d="M471 880 H482 M471 893.5 H482 M472.5 882 V891.5 H480.5 V882 Z M486 880 V884 M486 890 V894" fill="none" stroke="#e8e8e8" stroke-width="1.6"/>
<circle cx="486" cy="887" r="1.3" fill="#e8e8e8"/>
<!-- edge -->
<circle cx="532.5" cy="888" r="12.3" fill="#1e8fe0"/>
<path d="M520.5 887 C521 876 540 873 544.5 885 C545 891 538 893 532 890 C527 888 530 884 535 884 C531 881 524 882 522 890 C523 897 530 901 538 899 C530 900 520.5 895 520.5 887Z" fill="#43c878"/>
<path d="M527 889 C527 884 536 883 537 888 L526.5 889.5Z" fill="#1b5fb8"/>
<!-- explorer -->
<path d="M572.5 877 H582 L584 879.5 H596.5 V896.5 H572.5Z" fill="#f0c03c"/>
<rect x="572.5" y="881.5" width="24" height="15" fill="#fcd462"/>
<path d="M578 896.5 V889 H591 V896.5 H587.5 V892 H581.5 V896.5Z" fill="#3b8ad8"/>
<!-- store -->
<path d="M629 881 V878 C629 874.5 643 874.5 643 878 V881" fill="none" stroke="#f4f4f4" stroke-width="1.6"/>
<rect x="623.5" y="880.5" width="25.5" height="19" fill="#f6f6f6"/>
<rect x="631.5" y="884" width="4.3" height="4.3" fill="#f25022"/><rect x="636.5" y="884" width="4.3" height="4.3" fill="#7fba00"/>
<rect x="631.5" y="889" width="4.3" height="4.3" fill="#00a4ef"/><rect x="636.5" y="889" width="4.3" height="4.3" fill="#ffb900"/>
<!-- mail -->
<path d="M675.5 883 L688.5 875.5 L701.5 883 V899.5 H675.5Z" fill="#0f6cc4"/>
<path d="M675.5 883.5 H701.5 V899.5 H675.5Z" fill="#41a3ea"/>
<path d="M675.5 883.5 H701.5 L688.5 891.5Z" fill="#e8f4fc"/>
<!-- chrome -->
<circle cx="740.6" cy="887.4" r="12" fill="#db4437"/>
<path d="M740.6 887.4 L730.2 881.4 A12 12 0 0 0 734.6 897.8Z" fill="#0f9d58"/>
<path d="M740.6 887.4 L734.6 897.8 A12 12 0 0 0 752.6 887.4Z" fill="#ffcd40"/>
<circle cx="740.6" cy="887.4" r="5.5" fill="#fff"/>
<circle cx="740.6" cy="887.4" r="4.2" fill="#4a8af4"/>
<!-- ie -->
<path d="M783 890 C782 880 793 875 800 880 C804 884 803 889 802 890 H788.5 C789 895 797 896 800 892 H803 C801 899 785 900 783 890Z M788.5 886.5 H797.5 C797 882 789 882 788.5 886.5Z" fill="#3ec8f2"/>
<path d="M782 897 C778 893 790 879 806 877 C809 877 808 880 806 882 C808 878 799 878 790 886 C782 893 782 897 786 897 C783 899 781 898 782 897Z" fill="#f4c43a"/>
<!-- word -->
<rect x="838.5" y="875.5" width="19" height="22.5" rx="1.5" fill="#2b7cd3"/>
<rect x="838.5" y="882" width="19" height="6" fill="#41a5ee" opacity="0.7"/>
<rect x="838.5" y="891" width="19" height="7" fill="#185abd"/>
<rect x="832.5" y="880" width="13.5" height="13.5" rx="1" fill="#185abd"/>
<text x="834.5" y="891" font-family="Liberation Sans" font-weight="bold" font-size="10" fill="#fff">W</text>
<!-- ai active -->
<rect x="873" y="866" width="51" height="35" fill="#5e4e4e"/>
<rect x="885.5" y="875" width="23.5" height="22.5" rx="1" fill="#2f0d02" stroke="#f7801e" stroke-width="1.6"/>
<text x="889" y="892" font-family="Liberation Sans" font-size="13" fill="#f7941d">Ai</text>
<!-- ps -->
<rect x="938" y="875" width="23.5" height="22.5" rx="1" fill="#001d34" stroke="#31a8ff" stroke-width="1.6"/>
<text x="940.5" y="892" font-family="Liberation Sans" font-size="13" fill="#31a8ff">Ps</text>
<!-- photos -->
<rect x="999.5" y="876" width="26" height="23.5" fill="#3cb0ee"/>
<path d="M999.5 899.5 V889 L1007.5 884 L1018 894 L1026 891 V899.5Z" fill="#2352a8"/>
<circle cx="1016" cy="881" r="2.6" fill="#eaf4fb"/>
</svg>


</body></html>
